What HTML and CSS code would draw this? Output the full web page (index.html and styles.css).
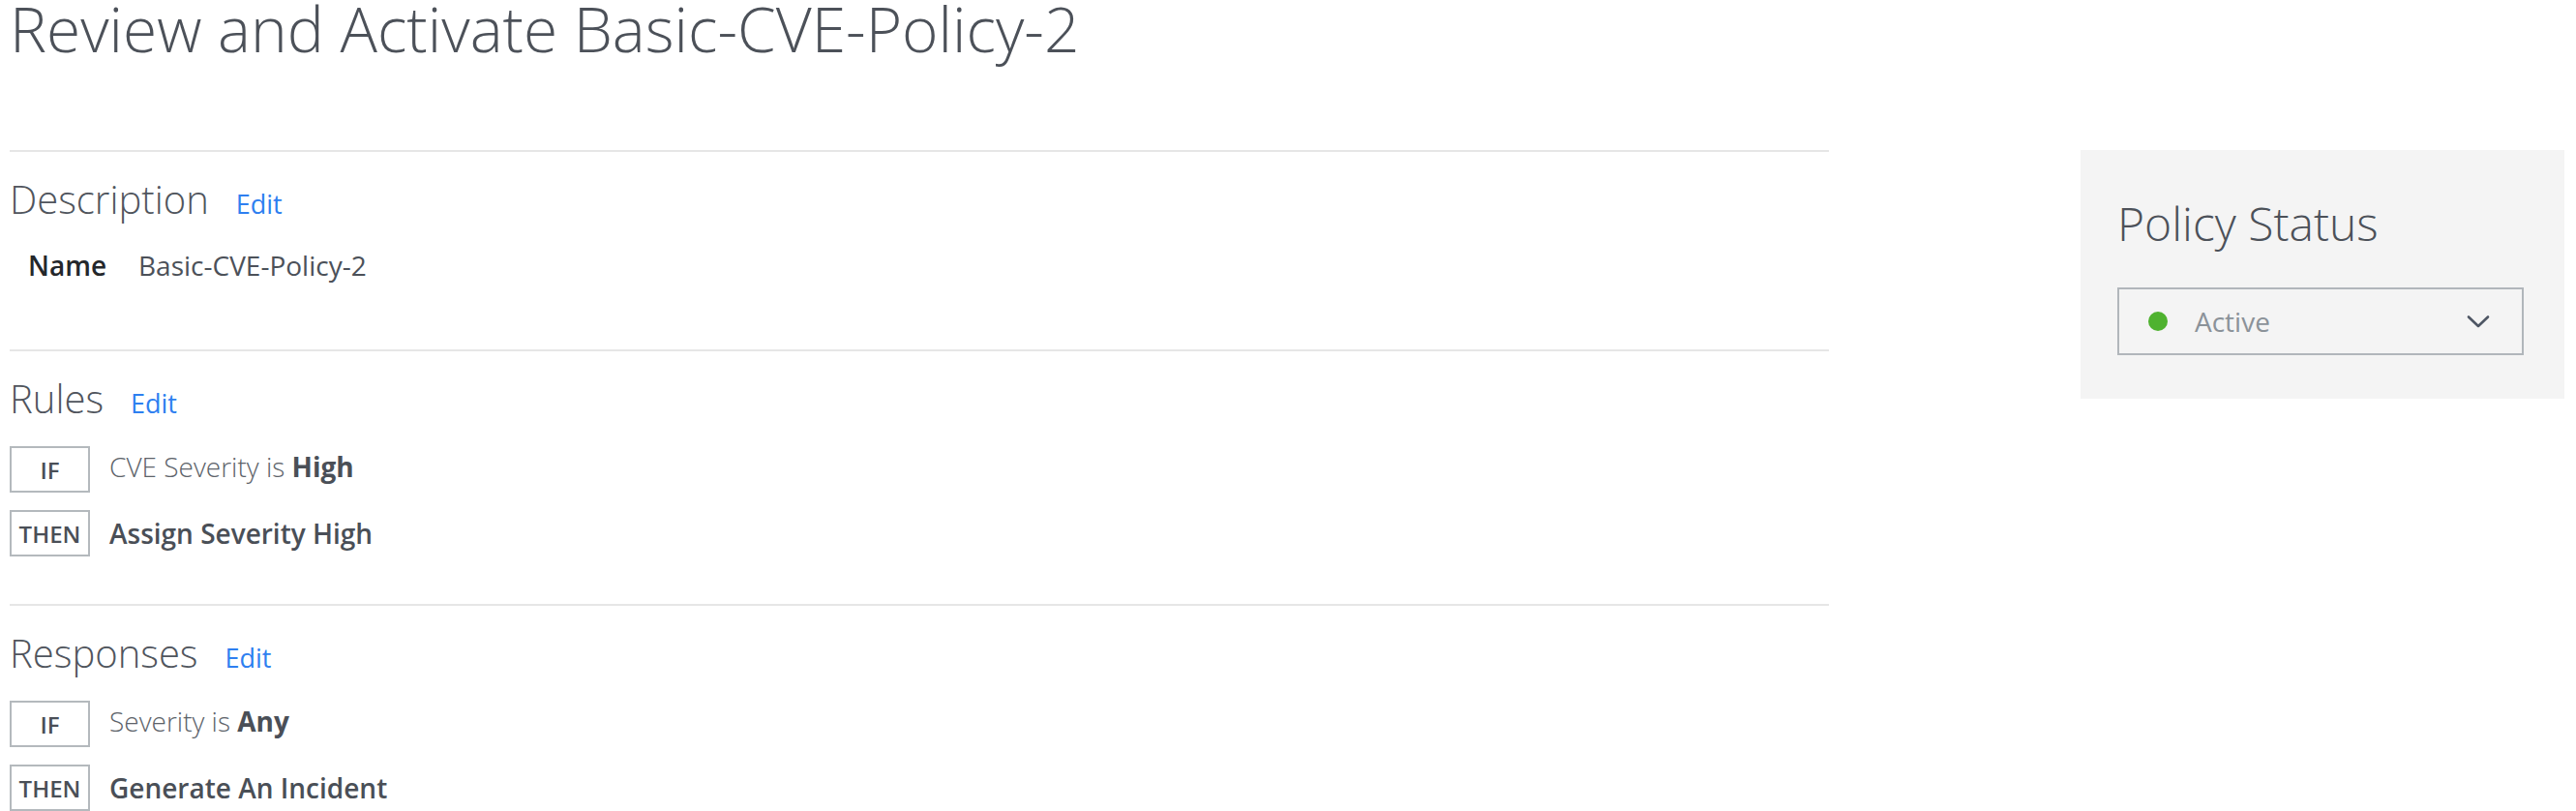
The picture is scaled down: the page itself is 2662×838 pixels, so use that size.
FILE: index.html
```html
<!DOCTYPE html>
<html lang="en">
<head>
<meta charset="utf-8">
<title>Review and Activate Basic-CVE-Policy-2</title>
<link rel="stylesheet" href="styles.css">
</head>
<body>
<div class="page">
  <h1 class="title">Review and Activate Basic-CVE-Policy-2</h1>
  <div class="layout">
    <main class="main">
      <section class="section section-desc">
        <div class="section-head">
          <h2 class="section-title">Description</h2>
          <a class="edit" href="#">Edit</a>
        </div>
        <div class="field">
          <span class="field-label">Name</span>
          <span class="field-value">Basic-CVE-Policy-2</span>
        </div>
      </section>
      <section class="section">
        <div class="section-head">
          <h2 class="section-title">Rules</h2>
          <a class="edit" href="#">Edit</a>
        </div>
        <div class="rules">
          <div class="rule">
            <span class="tag">IF</span>
            <span class="cond">CVE Severity is <b>High</b></span>
          </div>
          <div class="rule">
            <span class="tag">THEN</span>
            <span class="action">Assign Severity High</span>
          </div>
        </div>
      </section>
      <section class="section">
        <div class="section-head">
          <h2 class="section-title">Responses</h2>
          <a class="edit" href="#">Edit</a>
        </div>
        <div class="rules">
          <div class="rule">
            <span class="tag">IF</span>
            <span class="cond">Severity is <b>Any</b></span>
          </div>
          <div class="rule">
            <span class="tag">THEN</span>
            <span class="action">Generate An Incident</span>
          </div>
        </div>
      </section>
    </main>
    <aside class="status-panel">
      <h2 class="status-title">Policy Status</h2>
      <div class="select">
        <span class="dot"></span>
        <span class="select-value">Active</span>
        <svg class="chevron" width="24" height="15" viewBox="0 0 24 15" aria-hidden="true">
          <polyline points="2,2.5 12,12 22,2.5" fill="none" stroke="#4e5664" stroke-width="2.6" stroke-linecap="round" stroke-linejoin="round"/>
        </svg>
      </div>
    </aside>
  </div>
</div>
</body>
</html>
```
FILE: styles.css
```css
html, body {
  margin: 0;
  padding: 0;
  background: #ffffff;
}
body {
  font-family: "Open Sans", "Noto Sans", "Liberation Sans", sans-serif;
  color: #4c5159;
  overflow: hidden;
}
.page {
  padding-left: 10px;
}
.title {
  margin: 0 0 95px 0;
  font-size: 64px;
  line-height: 60px;
  font-weight: 300;
  color: #4c5159;
  white-space: nowrap;
}
.layout {
  display: flex;
  align-items: flex-start;
}
.main {
  width: 1880px;
  flex: none;
}
.section {
  border-top: 2px solid #e6e6e6;
  padding: 22px 0 49px 0;
}
.section-head {
  display: flex;
  align-items: baseline;
}
.section-title {
  margin: 0;
  font-size: 40px;
  line-height: 54px;
  font-weight: 300;
  color: #50555d;
}
.edit {
  margin-left: 28px;
  font-size: 27px;
  color: #2e7ff0;
  text-decoration: none;
}
.field {
  display: flex;
  align-items: baseline;
  gap: 33px;
  margin: 23px 0 20px 0;
  padding-left: 19px;
  font-size: 28px;
  line-height: 36px;
}
.field-label {
  font-weight: 600;
  color: #24272b;
}
.field-value {
  color: #4c5159;
}
.rules {
  display: flex;
  flex-direction: column;
  gap: 18px;
  margin-top: 22px;
}
.rule {
  display: flex;
  align-items: center;
  gap: 20px;
}
.tag {
  box-sizing: border-box;
  width: 83px;
  height: 48px;
  border: 2px solid #b4b9bd;
  display: flex;
  align-items: center;
  justify-content: center;
  font-size: 24px;
  font-weight: 600;
  color: #4a4f57;
  flex: none;
}
.cond {
  font-size: 28px;
  line-height: 38px;
  font-weight: 300;
  color: #5d636a;
  padding-bottom: 6px;
}
.cond b {
  font-weight: 700;
  color: #4a4f57;
}
.action {
  font-size: 28px;
  line-height: 38px;
  font-weight: 600;
  color: #4a4f57;
}
.status-panel {
  box-sizing: border-box;
  flex: none;
  width: 500px;
  margin-left: 260px;
  background: #f4f4f4;
  padding: 44px 38px 45px 38px;
}
.status-title {
  margin: 0 0 34px 0;
  font-size: 48px;
  line-height: 64px;
  font-weight: 300;
  color: #4c5159;
  white-space: nowrap;
}
.select {
  box-sizing: border-box;
  width: 420px;
  height: 70px;
  border: 2px solid #b1b6bb;
  display: flex;
  align-items: center;
  padding: 0 33px 0 30px;
}
.dot {
  width: 20px;
  height: 20px;
  border-radius: 50%;
  background: #4fb22f;
  flex: none;
}
.select-value {
  margin-left: 28px;
  font-size: 28px;
  line-height: 38px;
  color: #8b9299;
  flex: 1;
}
.chevron {
  flex: none;
}
```
